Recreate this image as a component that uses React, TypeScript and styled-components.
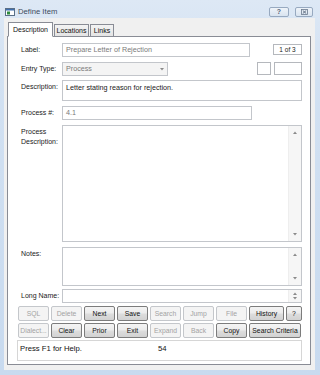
import styled, { createGlobalStyle } from "styled-components";

const GlobalStyle = createGlobalStyle`
  html, body { margin: 0; padding: 0; }
  body {
    font-family: "Liberation Sans", Arial, sans-serif;
    background: #c9dcf0;
  }
`;

const Window = styled.div`
  width: 320px;
  height: 375px;
  box-sizing: border-box;
  display: flex;
  flex-direction: column;
  padding: 0 5px 5px 4px;
  background: linear-gradient(180deg, #dde8f5 0%, #d2e1f2 20%, #c8daef 100%);
`;

const TitleBar = styled.div`
  height: 18px;
  box-sizing: border-box;
  padding: 5px 2px 0 1px;
  display: flex;
  align-items: center;
  gap: 3px;
`;

const Title = styled.span`
  flex: 1;
  font-size: 7.7px;
  color: #3c4a5c;
`;

const CaptionButton = styled.div<{ $w: number }>`
  width: ${(p) => p.$w}px;
  height: 10px;
  box-sizing: border-box;
  border: 1px solid #97a9c0;
  border-radius: 2px;
  background: linear-gradient(180deg, #eef3f9, #d9e4f0);
  display: flex;
  align-items: center;
  justify-content: center;
  font-size: 7px;
  font-weight: bold;
  color: #56657a;
  margin-left: 3px;
`;

const Client = styled.div`
  flex: 1;
  display: flex;
  flex-direction: column;
  background: #f0f0f0;
  padding: 4px 4px 5px 3px;
`;

const TabStrip = styled.div`
  display: flex;
  align-items: flex-end;
  padding-left: 1px;
  margin-bottom: -1px;
  position: relative;
  z-index: 1;
`;

const Tab = styled.div<{ $active?: boolean; $w: number }>`
  width: ${(p) => p.$w}px;
  height: ${(p) => (p.$active ? 15 : 13)}px;
  box-sizing: border-box;
  border: 1px solid #898c95;
  border-bottom: 1px solid ${(p) => (p.$active ? "#fff" : "#898c95")};
  margin-left: ${(p) => (p.$active ? 0 : 1)}px;
  background: ${(p) => (p.$active ? "#fff" : "linear-gradient(180deg, #f3f3f3, #e4e4e4)")};
  font-size: 7px;
  color: #111;
  display: flex;
  align-items: center;
  justify-content: center;
`;

const Panel = styled.div`
  flex: 1;
  background: #fff;
  border: 1px solid #898c95;
  padding: 6px 8px 3px 9px;
  display: flex;
  flex-direction: column;
`;

const Row = styled.div<{ $top: number; $h: number }>`
  display: flex;
  align-items: flex-start;
  margin-top: ${(p) => p.$top}px;
  height: ${(p) => p.$h}px;
  padding-left: 4px;
`;

const Label = styled.div<{ $pad?: number; $lh?: number }>`
  width: 41px;
  flex-shrink: 0;
  font-size: 7px;
  color: #1a1a1a;
  line-height: ${(p) => p.$lh ?? 14}px;
  padding-top: ${(p) => p.$pad ?? 0}px;
`;

const Field = styled.div<{ $w?: number; $muted?: boolean; $bg?: string }>`
  ${(p) => (p.$w ? `width: ${p.$w}px;` : "flex: 1;")}
  height: 100%;
  box-sizing: border-box;
  border: 1px solid #c3c6cb;
  background: ${(p) => p.$bg ?? "#fff"};
  display: flex;
  font-size: 7.2px;
  color: ${(p) => (p.$muted ? "#7a7a7a" : "#1a1a1a")};
`;

const FieldText = styled.div<{ $top?: number }>`
  flex: 1;
  padding: ${(p) => p.$top ?? 0}px 3px 0 3px;
  line-height: 12px;
  white-space: nowrap;
  overflow: hidden;
`;

const DropButton = styled.div`
  width: 10px;
  display: flex;
  align-items: center;
  justify-content: center;
`;

const SmallBox = styled.div<{ $w: number; $ml?: number }>`
  width: ${(p) => p.$w}px;
  height: ${(p) => (p.$ml !== undefined ? 13 : 11)}px;
  box-sizing: border-box;
  border: 1px solid #b5b8bd;
  background: #fff;
  margin-left: ${(p) => p.$ml ?? 0}px;
  font-size: 6.5px;
  color: #222;
  display: flex;
  align-items: center;
  justify-content: center;
`;

const Spacer = styled.div`
  flex: 1;
`;

const ScrollTrack = styled.div<{ $pad: number }>`
  width: 12px;
  background: #f6f6f6;
  border-left: 1px solid #eeeeee;
  display: flex;
  flex-direction: column;
  justify-content: space-between;
  align-items: center;
  padding: ${(p) => p.$pad}px 0;
`;

const ButtonRow = styled.div<{ $top: number }>`
  display: flex;
  gap: 2px;
  margin-top: ${(p) => p.$top}px;
  padding-left: 1px;
`;

const Btn = styled.div<{ $w?: number; $off?: boolean }>`
  width: ${(p) => p.$w ?? 31}px;
  height: 15px;
  box-sizing: border-box;
  border: 1px solid ${(p) => (p.$off ? "#c4c7cb" : "#7c7c7c")};
  border-radius: 2px;
  background: ${(p) =>
    p.$off
      ? "#f4f4f4"
      : "linear-gradient(180deg, #f4f4f4 0%, #ebebeb 48%, #dddddd 52%, #d2d2d2 100%)"};
  color: ${(p) => (p.$off ? "#a3a3a3" : "#111")};
  font-size: 6.8px;
  display: flex;
  align-items: center;
  justify-content: center;
  white-space: nowrap;
`;

const Status = styled.div`
  margin-top: 2px;
  height: 21px;
  box-sizing: border-box;
  border: 1px solid #d6d6d6;
  background: #fff;
  display: flex;
  padding: 3px 0 0 2px;
  font-size: 7.7px;
  color: #111;
`;

const StatusMsg = styled.span`
  width: 138px;
`;

function Tri({ up }: { up?: boolean }) {
  return (
    <svg width="4" height="3" viewBox="0 0 4 3">
      <path d={up ? "M0 3 L2 0.5 L4 3 Z" : "M0 0 L2 2.5 L4 0 Z"} fill="#8a8a8a" />
    </svg>
  );
}

function CloseGlyph() {
  return (
    <svg width="7" height="6" viewBox="0 0 7 6">
      <rect x="0.5" y="0.5" width="6" height="5" fill="none" stroke="#6b7a8e" strokeWidth="0.8" />
      <path d="M1.8 1.5 L5.2 4.5 M5.2 1.5 L1.8 4.5" stroke="#56657a" strokeWidth="0.9" />
    </svg>
  );
}

function AppIcon() {
  return (
    <svg width="10" height="8" viewBox="0 0 10 8">
      <rect x="0.5" y="0.5" width="9" height="7" fill="#fff" stroke="#5a6f86" />
      <rect x="1" y="1" width="8" height="1.5" fill="#3f6fb0" />
      <rect x="2" y="3.5" width="3" height="3" fill="#2e8b3e" />
    </svg>
  );
}

const row1 = [
  { t: "SQL", off: true },
  { t: "Delete", off: true },
  { t: "Next" },
  { t: "Save" },
  { t: "Search", off: true },
  { t: "Jump", off: true },
  { t: "File", off: true },
  { t: "History", w: 35 },
  { t: "?", w: 16 },
];

const row2 = [
  { t: "Dialect...", off: true },
  { t: "Clear" },
  { t: "Prior" },
  { t: "Exit" },
  { t: "Expand", off: true },
  { t: "Back", off: true },
  { t: "Copy" },
  { t: "Search Criteria", w: 52 },
];

export default function App() {
  return (
    <>
      <GlobalStyle />
      <Window>
        <TitleBar>
          <AppIcon />
          <Title>Define Item</Title>
          <CaptionButton $w={20}>?</CaptionButton>
          <CaptionButton $w={18}>
            <CloseGlyph />
          </CaptionButton>
        </TitleBar>
        <Client>
          <TabStrip>
            <Tab $active $w={45}>Description</Tab>
            <Tab $w={35}>Locations</Tab>
            <Tab $w={24}>Links</Tab>
          </TabStrip>
          <Panel>
            <Row $top={0} $h={14}>
              <Label>Label:</Label>
              <Field $w={188} $muted>
                <FieldText>Prepare Letter of Rejection</FieldText>
              </Field>
              <Spacer />
              <SmallBox $w={29} style={{ marginTop: 1 }}>1 of 3</SmallBox>
            </Row>
            <Row $top={5} $h={14}>
              <Label>Entry Type:</Label>
              <Field $w={106} $muted $bg="#f4f4f4">
                <FieldText>Process</FieldText>
                <DropButton>
                  <Tri />
                </DropButton>
              </Field>
              <Spacer />
              <SmallBox $w={14} $ml={0} />
              <SmallBox $w={28} $ml={3} />
            </Row>
            <Row $top={4} $h={21}>
              <Label>Description:</Label>
              <Field>
                <FieldText $top={1}>Letter stating reason for rejection.</FieldText>
              </Field>
            </Row>
            <Row $top={5} $h={14}>
              <Label>Process #:</Label>
              <Field $w={190} $muted>
                <FieldText>4.1</FieldText>
              </Field>
            </Row>
            <Row $top={5} $h={117}>
              <Label $pad={2} $lh={10}>
                Process
                <br />
                Description:
              </Label>
              <Field>
                <FieldText />
                <ScrollTrack $pad={5}>
                  <Tri up />
                  <Tri />
                </ScrollTrack>
              </Field>
            </Row>
            <Row $top={5} $h={39}>
              <Label>Notes:</Label>
              <Field>
                <FieldText />
                <ScrollTrack $pad={5}>
                  <Tri up />
                  <Tri />
                </ScrollTrack>
              </Field>
            </Row>
            <Row $top={3} $h={14}>
              <Label>Long Name:</Label>
              <Field>
                <FieldText />
                <ScrollTrack $pad={2}>
                  <Tri up />
                  <Tri />
                </ScrollTrack>
              </Field>
            </Row>
            <ButtonRow $top={3}>
              {row1.map((b) => (
                <Btn key={b.t} $w={b.w} $off={b.off}>
                  {b.t}
                </Btn>
              ))}
            </ButtonRow>
            <ButtonRow $top={2}>
              {row2.map((b) => (
                <Btn key={b.t} $w={b.w} $off={b.off}>
                  {b.t}
                </Btn>
              ))}
            </ButtonRow>
            <Status>
              <StatusMsg>Press F1 for Help.</StatusMsg>
              <span>54</span>
            </Status>
          </Panel>
        </Client>
      </Window>
    </>
  );
}
